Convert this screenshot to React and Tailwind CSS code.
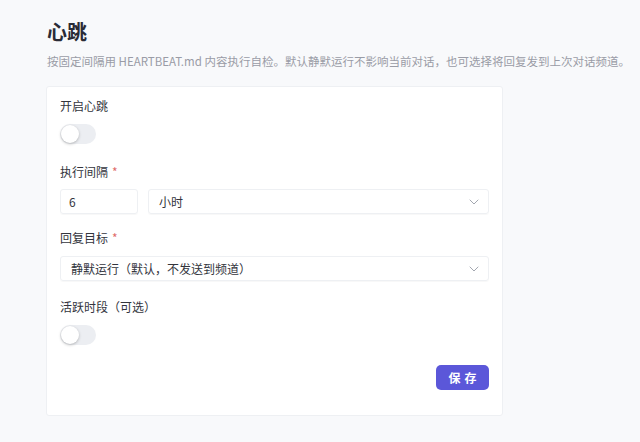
import React from "react";

function Toggle() {
  return (
    <div className="relative h-[20px] w-[36px] rounded-full bg-[#eceef2]">
      <div className="absolute left-[1px] top-[1px] h-[18px] w-[18px] rounded-full bg-white shadow-[0_1px_3px_rgba(0,0,0,0.25)]" />
    </div>
  );
}

function Chevron() {
  return (
    <svg width="10" height="6" viewBox="0 0 10 6" fill="none" className="shrink-0">
      <path d="M1 1l4 4 4-4" stroke="#a3a7b0" strokeWidth="1" strokeLinecap="round" strokeLinejoin="round" />
    </svg>
  );
}

function Label({ children, required }) {
  return (
    <div className="text-[12px] leading-[14px] text-[#33353d]">
      {children}
      {required && <span className="ml-[4px] text-[#e06b6b]">*</span>}
    </div>
  );
}

export default function App() {
  return (
    <div
      className="min-h-[442px] w-[640px] bg-[#f8f9fb] pl-[46px] pt-[20px]"
      style={{ fontFamily: '"Noto Sans CJK SC", "Noto Sans", sans-serif' }}
    >
      <h1 className="pl-[1px] text-[20px] font-bold leading-[24px] text-[#2a2b36]">心跳</h1>
      <p className="mt-[9px] pl-[1px] text-[11.5px] leading-[16px] text-[#9a9ca6] whitespace-nowrap">
        按固定间隔用 HEARTBEAT.md 内容执行自检。默认静默运行不影响当前对话，也可选择将回复发到上次对话频道。
      </p>
      <div className="mt-[17px] w-[457px] rounded-[3px] border border-[#eef0f3] bg-white px-[13px] pb-[25px] pt-[12px]">
        <Label>开启心跳</Label>
        <div className="mt-[11px]">
          <Toggle />
        </div>

        <div className="mt-[21px]">
          <Label required>执行间隔</Label>
        </div>
        <div className="mt-[10px] flex gap-[10px]">
          <div className="flex h-[25px] w-[78px] items-center rounded-[3px] border border-[#eef0f3] px-[8px] text-[12px] text-[#33353d] shadow-[0_1px_1px_rgba(0,0,0,0.03)]">
            6
          </div>
          <div className="flex h-[25px] flex-1 items-center justify-between rounded-[3px] border border-[#eef0f3] pl-[10px] pr-[9px] text-[12px] text-[#33353d] shadow-[0_1px_1px_rgba(0,0,0,0.03)]">
            <span>小时</span>
            <Chevron />
          </div>
        </div>

        <div className="mt-[17px]">
          <Label required>回复目标</Label>
        </div>
        <div className="mt-[11px] flex h-[25px] items-center justify-between rounded-[3px] border border-[#eef0f3] pl-[10px] pr-[9px] text-[12px] text-[#33353d] shadow-[0_1px_1px_rgba(0,0,0,0.03)]">
          <span>静默运行（默认，不发送到频道）</span>
          <Chevron />
        </div>

        <div className="mt-[19px]">
          <Label>活跃时段（可选）</Label>
        </div>
        <div className="mt-[11px]">
          <Toggle />
        </div>

        <div className="mt-[20px] flex justify-end">
          <button className="h-[25px] w-[53px] rounded-[5px] bg-[#5b57d9] text-[12px] font-semibold tracking-[4px] pl-[4px] text-white">
            保存
          </button>
        </div>
      </div>
    </div>
  );
}
